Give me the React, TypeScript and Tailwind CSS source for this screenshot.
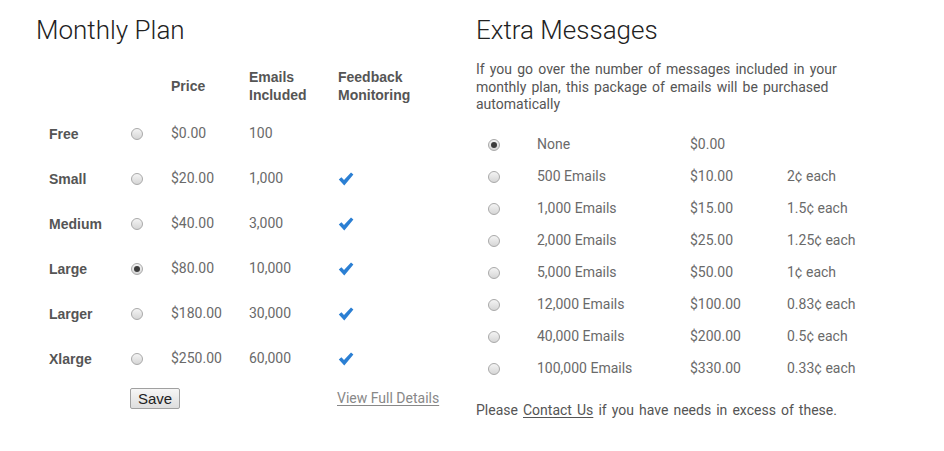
import React from 'react'

const plans = [
  { name: 'Free', price: '$0.00', emails: '100', feedback: false, checked: false },
  { name: 'Small', price: '$20.00', emails: '1,000', feedback: true, checked: false },
  { name: 'Medium', price: '$40.00', emails: '3,000', feedback: true, checked: false },
  { name: 'Large', price: '$80.00', emails: '10,000', feedback: true, checked: true },
  { name: 'Larger', price: '$180.00', emails: '30,000', feedback: true, checked: false },
  { name: 'Xlarge', price: '$250.00', emails: '60,000', feedback: true, checked: false },
]

const extras = [
  { label: 'None', price: '$0.00', each: '', checked: true },
  { label: '500 Emails', price: '$10.00', each: '2¢ each', checked: false },
  { label: '1,000 Emails', price: '$15.00', each: '1.5¢ each', checked: false },
  { label: '2,000 Emails', price: '$25.00', each: '1.25¢ each', checked: false },
  { label: '5,000 Emails', price: '$50.00', each: '1¢ each', checked: false },
  { label: '12,000 Emails', price: '$100.00', each: '0.83¢ each', checked: false },
  { label: '40,000 Emails', price: '$200.00', each: '0.5¢ each', checked: false },
  { label: '100,000 Emails', price: '$330.00', each: '0.33¢ each', checked: false },
]

function Radio({ checked }: { checked: boolean }) {
  return (
    <span className="flex h-[12px] w-[12px] items-center justify-center rounded-full border border-[#a9a9a9] bg-gradient-to-b from-[#f4f4f4] to-[#d6d6d6]">
      {checked && <span className="h-[6px] w-[6px] rounded-full bg-[#3c3c3c]" />}
    </span>
  )
}

function Check() {
  return (
    <svg width="16" height="14" viewBox="0 0 16 14" className="text-[#2b7fd3]">
      <path d="M0.8 7.4 L3.4 5.2 L6 8 L13 0.6 L15.4 2.6 L6.3 13.4 Z" fill="currentColor" />
    </svg>
  )
}

export default function App() {
  return (
    <div className="flex min-h-[451px] w-[944px] bg-white font-['Roboto',sans-serif] text-[14px] text-[#6a6a6a]">
      {/* Monthly plan */}
      <div className="ml-[36px] w-[440px] pt-[15px]">
        <h2 className="text-[26px] font-light leading-[30px] text-[#222]">Monthly Plan</h2>
        <div className="mt-[16px] pl-[13px] grid grid-cols-[82px_40px_78px_89px_110px]">
          <div className="h-[50px]" />
          <div className="h-[50px]" />
          {['Price', 'Emails Included', 'Feedback Monitoring'].map((h) => (
            <div
              key={h}
              className="flex h-[50px] items-center font-['Liberation_Sans',Arial,sans-serif] text-[14px] font-bold leading-[18px] text-[#555]"
            >
              <span className={h === 'Price' ? '' : 'w-[80px]'}>{h}</span>
            </div>
          ))}
          {plans.map((p) => (
            <React.Fragment key={p.name}>
              <div className="flex h-[45px] items-center pt-[2px] font-['Liberation_Sans',Arial,sans-serif] font-bold text-[#555]">
                {p.name}
              </div>
              <div className="flex h-[45px] items-center">
                <Radio checked={p.checked} />
              </div>
              <div className="flex h-[45px] items-center">{p.price}</div>
              <div className="flex h-[45px] items-center">{p.emails}</div>
              <div className="flex h-[45px] items-center">{p.feedback && <Check />}</div>
            </React.Fragment>
          ))}
        </div>
        <div className="mt-[7px] flex items-center pl-[94px]">
          <button className="h-[21px] w-[50px] rounded-[2px] border border-[#a0a0a0] bg-gradient-to-b from-[#f6f6f6] to-[#dedede] font-['Liberation_Sans',Arial,sans-serif] text-[15px] leading-[19px] text-[#222]">
            Save
          </button>
          <a className="ml-[157px] text-[#888] underline underline-offset-2">View Full Details</a>
        </div>
      </div>

      {/* Extra messages */}
      <div className="w-[420px] pt-[15px]">
        <h2 className="text-[26px] font-light leading-[30px] text-[#222]">Extra Messages</h2>
        <p className="mt-[16px] w-[380px] leading-[17.5px] text-[#555] [word-spacing:1.7px]">
          If you go over the number of messages included in your monthly plan, this package of emails will be
          purchased automatically
        </p>
        <div className="mt-[15px] grid grid-cols-[61px_153px_97px_100px]">
          {extras.map((e) => (
            <React.Fragment key={e.label}>
              <div className="flex h-[32px] items-center pl-[12px]">
                <Radio checked={e.checked} />
              </div>
              <div className="flex h-[32px] items-center">{e.label}</div>
              <div className="flex h-[32px] items-center">{e.price}</div>
              <div className="flex h-[32px] items-center">{e.each}</div>
            </React.Fragment>
          ))}
        </div>
        <p className="mt-[16px] leading-[18px] text-[#555] [word-spacing:1.6px]">
          Please <a className="underline underline-offset-2">Contact Us</a> if you have needs in excess of these.
        </p>
      </div>
    </div>
  )
}
